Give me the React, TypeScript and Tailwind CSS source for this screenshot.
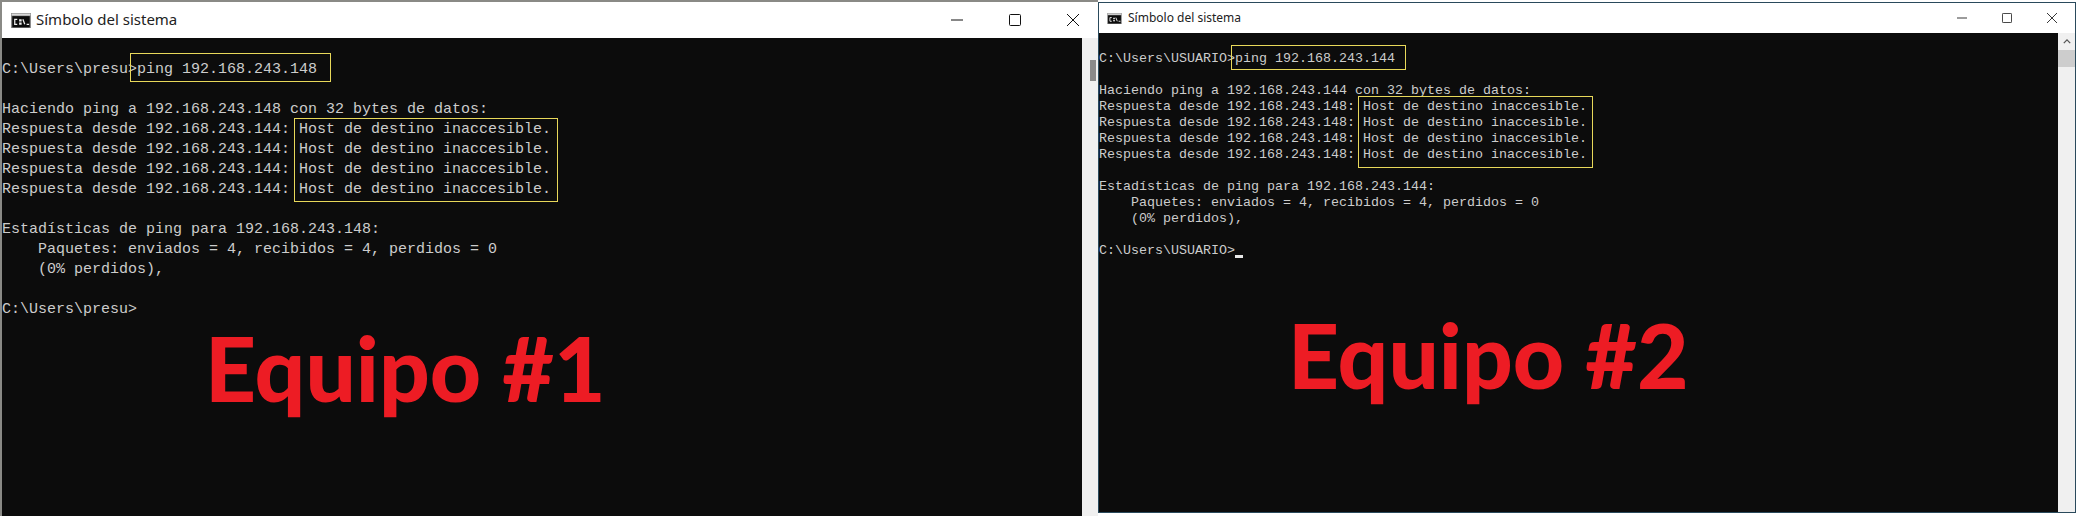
import React from 'react';

const mono = "font-['Liberation_Mono',monospace]";

const CmdIcon = ({ className }: { className: string }) => (
  <svg viewBox="0 0 16 12" className={className}>
    <rect width="16" height="12" fill="#8c8c8c" />
    <rect x="0.5" y="0.5" width="15" height="1.5" fill="#d8d8d8" />
    <rect x="1" y="2.5" width="14" height="9" fill="#0c0c0c" />
    <path d="M5 5H3v4h2M7 5.5h1v.8H7zM7 8h1v.8H7zM9.5 5l1.5 4M12.5 9h2" fill="none" stroke="#f0f0f0" strokeWidth="1" />
  </svg>
);

const WinControls = ({ size, gap }: { size: string; gap: string }) => (
  <div className={`flex items-center ${gap}`}>
    <svg viewBox="0 0 12 12" className={size}><path d="M0 6h12" stroke="#111" strokeWidth="1" /></svg>
    <svg viewBox="0 0 12 12" className={size}><rect x="0.5" y="0.5" width="11" height="11" rx="1" fill="none" stroke="#111" strokeWidth="1" /></svg>
    <svg viewBox="0 0 12 12" className={size}><path d="M0 0l12 12M12 0L0 12" stroke="#111" strokeWidth="1" /></svg>
  </div>
);

const leftLines = [
  '',
  'C:\\Users\\presu>ping 192.168.243.148',
  '',
  'Haciendo ping a 192.168.243.148 con 32 bytes de datos:',
  'Respuesta desde 192.168.243.144: Host de destino inaccesible.',
  'Respuesta desde 192.168.243.144: Host de destino inaccesible.',
  'Respuesta desde 192.168.243.144: Host de destino inaccesible.',
  'Respuesta desde 192.168.243.144: Host de destino inaccesible.',
  '',
  'Estadísticas de ping para 192.168.243.148:',
  '    Paquetes: enviados = 4, recibidos = 4, perdidos = 0',
  '    (0% perdidos),',
  '',
  'C:\\Users\\presu>',
];

const rightLines = [
  '',
  'C:\\Users\\USUARIO>ping 192.168.243.144',
  '',
  'Haciendo ping a 192.168.243.144 con 32 bytes de datos:',
  'Respuesta desde 192.168.243.148: Host de destino inaccesible.',
  'Respuesta desde 192.168.243.148: Host de destino inaccesible.',
  'Respuesta desde 192.168.243.148: Host de destino inaccesible.',
  'Respuesta desde 192.168.243.148: Host de destino inaccesible.',
  '',
  'Estadísticas de ping para 192.168.243.144:',
  '    Paquetes: enviados = 4, recibidos = 4, perdidos = 0',
  '    (0% perdidos),',
  '',
];

export default function App() {
  return (
    <div className="relative flex w-[2078px] h-[516px] overflow-hidden bg-white">
      {/* Equipo 1 */}
      <div className="flex flex-col w-[1098px] shrink-0 border-l-2 border-t-2 border-[#8a8a86]">
        <div className="flex items-center h-[36px] shrink-0 bg-white pl-[9px] pr-[19px]">
          <CmdIcon className="w-[20px] h-[15px]" />
          <span className="ml-[5px] -mt-[1px] font-['Noto_Sans',sans-serif] text-[15px] text-[#222]">Símbolo del sistema</span>
          <div className="ml-auto">
            <WinControls size="w-[12px] h-[12px]" gap="gap-[46px]" />
          </div>
        </div>
        <div className="flex flex-1 min-h-0">
          <div className={`relative flex-1 pt-[2px] bg-[#0c0c0c] text-[#cccccc] text-[15px] leading-[20px] whitespace-pre ${mono}`}>
            {leftLines.map((l, i) => (
              <div key={i} className="h-[20px]">{l}</div>
            ))}
            <div className="absolute left-[128px] top-[15px] w-[201px] h-[29px] border border-[#e8d85a]" />
            <div className="absolute left-[292px] top-[80px] w-[264px] h-[84px] border border-[#e8d85a]" />
            <div className="absolute left-[203px] top-[285px] font-['Lato',sans-serif] font-black text-[89px] leading-none text-[#ed1c24]">Equipo #1</div>
          </div>
          <div className="relative w-[16px] shrink-0 bg-[#f0f0f0]">
            <div className="absolute left-[8px] top-[22px] w-[6px] h-[21px] bg-[#8a8a8a]" />
          </div>
        </div>
      </div>

      {/* Equipo 2 */}
      <div className="flex flex-col w-[978px] h-[511px] mt-[2px] shrink-0 border border-[#2a4a5c]">
        <div className="flex items-center h-[30px] shrink-0 bg-white pl-[8px] pr-[18px]">
          <CmdIcon className="w-[15px] h-[11px]" />
          <span className="ml-[6px] font-['Noto_Sans',sans-serif] text-[12px] text-[#222]">Símbolo del sistema</span>
          <div className="ml-auto">
            <WinControls size="w-[10px] h-[10px]" gap="gap-[35px]" />
          </div>
        </div>
        <div className="flex flex-1 min-h-0">
          <div className={`relative flex-1 pt-[2px] bg-[#0c0c0c] text-[#cccccc] text-[13.33px] leading-[16px] whitespace-pre ${mono}`}>
            {rightLines.map((l, i) => (
              <div key={i} className="h-[16px]">{l}</div>
            ))}
            <div className="h-[16px] flex">
              <span>C:\Users\USUARIO&gt;</span>
              <span className="w-[8px] h-[3px] mt-[12px] bg-[#e8e8e8]" />
            </div>
            <div className="absolute left-[132px] top-[12px] w-[175px] h-[25px] border border-[#e8d85a]" />
            <div className="absolute left-[259px] top-[63px] w-[235px] h-[72px] border border-[#e8d85a]" />
            <div className="absolute left-[189px] top-[277px] font-['Lato',sans-serif] font-black text-[89px] leading-none text-[#ed1c24]">Equipo #2</div>
          </div>
          <div className="flex flex-col items-center w-[17px] shrink-0 bg-[#f0f0f0]">
            <svg viewBox="0 0 10 6" className="w-[8px] h-[5px] mt-[6px]"><path d="M1 5l4-4 4 4" fill="none" stroke="#555" strokeWidth="1.6" /></svg>
            <div className="w-full h-[17px] mt-[6px] bg-[#cdcdcd]" />
          </div>
        </div>
      </div>
    </div>
  );
}
